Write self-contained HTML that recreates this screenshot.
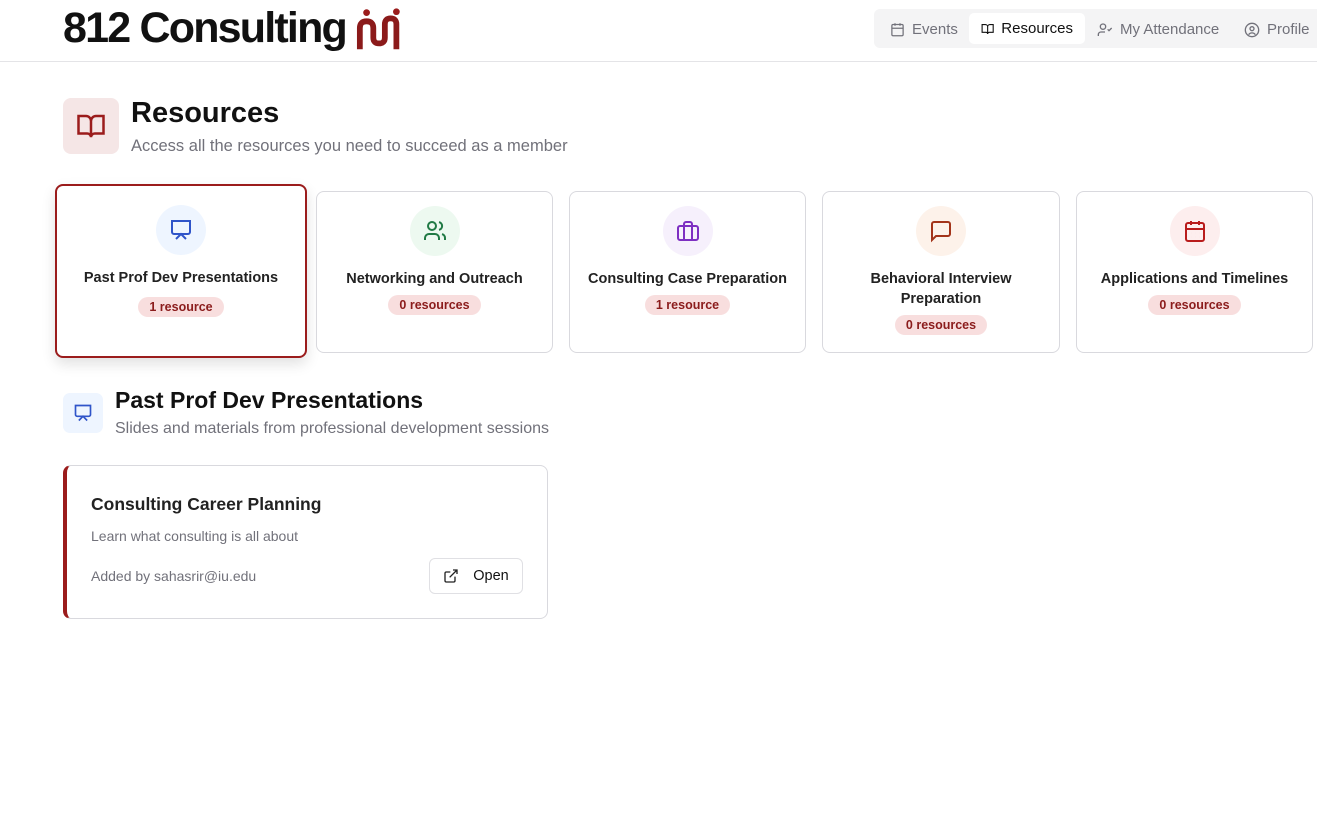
<!DOCTYPE html>
<html><head><meta charset="utf-8"><style>
*{box-sizing:border-box;margin:0;padding:0}
body{width:1317px;height:813px;background:#fff;font-family:"Liberation Sans",sans-serif;color:#111;position:relative;overflow:hidden}
.abs{position:absolute}
.hdr{position:absolute;left:0;top:0;width:1317px;height:62px;border-bottom:1px solid #e4e4e7}
.logo{left:63px;top:4px;font-size:43px;font-weight:bold;letter-spacing:-1.8px;color:#111}
.nav{left:874px;top:9px;width:450px;height:39px;background:#f4f4f5;border-radius:6px}
.ni{position:absolute;top:5px;height:31px;display:flex;align-items:center;gap:7px;font-size:15px;color:#71717a}
.ni.act{background:#fff;color:#111;border-radius:5px;padding:0 12px}
.card{position:absolute;top:191px;height:162px;border:1px solid #d9d9de;border-radius:8px;background:#fff;text-align:center}
.card.sel{border:2px solid #9b1c1c;box-shadow:0 6px 14px rgba(0,0,0,.12)}
.ic{position:absolute;left:50%;margin-left:-25px;top:14px;width:50px;height:50px;border-radius:50%;display:flex;align-items:center;justify-content:center}
.ct{position:absolute;left:0;right:0;top:77px;font-size:14.5px;font-weight:bold;color:#222;line-height:20px}
.bd{display:inline-block;background:#f8dede;color:#8b1c1c;font-size:12.5px;font-weight:bold;border-radius:11px;padding:3px 11px}
</style></head><body>
<div class="hdr"></div>
<div class="abs logo">812 Consulting</div>
<svg class="abs" style="left:356px;top:6px" width="50" height="46" viewBox="0 0 52 46"><circle cx="11" cy="6" r="3.5" fill="#9b1c1c"/><circle cx="42" cy="5" r="3.5" fill="#9b1c1c"/><path d="M4 44V22q0-7 7-7t7 7v10q0 6 6 6t6-6V18q0-6 6-6t6 6v26" fill="none" stroke="#8b1a1a" stroke-width="6"/></svg>
<div class="abs nav">
<div class="ni" style="left:16px"><svg width="15" height="15" viewBox="0 0 24 24" fill="none" stroke="#71717a" stroke-width="2"><rect x="3" y="4" width="18" height="18" rx="2"/><path d="M16 2v4M8 2v4M3 10h18"/></svg>Events</div>
<div class="ni act" style="left:95px;width:116px;top:4px"><svg width="16" height="16" viewBox="0 0 24 24" fill="none" stroke="#111" stroke-width="2"><path d="M2 4h6a4 4 0 0 1 4 4v13a3 3 0 0 0-3-3H2zM22 4h-6a4 4 0 0 0-4 4v13a3 3 0 0 1 3-3h7z"/></svg>Resources</div>
<div class="ni" style="left:223px"><svg width="16" height="16" viewBox="0 0 24 24" fill="none" stroke="#71717a" stroke-width="2"><circle cx="9" cy="7" r="4"/><path d="M2 21v-2a4 4 0 0 1 4-4h6M16 11l2 2 4-4"/></svg>My Attendance</div>
<div class="ni" style="left:370px"><svg width="16" height="16" viewBox="0 0 24 24" fill="none" stroke="#71717a" stroke-width="2"><circle cx="12" cy="12" r="10"/><circle cx="12" cy="10" r="3"/><path d="M7 19a6 6 0 0 1 10 0"/></svg>Profile</div>
</div>

<div class="abs" style="left:63px;top:98px;width:56px;height:56px;background:#f5e6e6;border-radius:8px;display:flex;align-items:center;justify-content:center"><svg width="30" height="30" viewBox="0 0 24 24" fill="none" stroke="#9b1c1c" stroke-width="2"><path d="M2 4h6a4 4 0 0 1 4 4v13a3 3 0 0 0-3-3H2zM22 4h-6a4 4 0 0 0-4 4v13a3 3 0 0 1 3-3h7z"/></svg></div>
<div class="abs" style="left:131px;top:97px;font-size:29px;font-weight:bold;color:#111">Resources</div>
<div class="abs" style="left:131px;top:137px;font-size:16.5px;color:#71717a">Access all the resources you need to succeed as a member</div>

<div class="card sel" style="left:55px;top:184px;width:252px;height:174px"><div class="ic" style="background:#eef5ff;top:19px"><svg width="24" height="24" viewBox="0 0 24 24" fill="none" stroke="#2f54c9" stroke-width="2"><path d="M2 3h20M3 3v11a2 2 0 0 0 2 2h14a2 2 0 0 0 2-2V3M7 21l5-5 5 5"/></svg></div><div class="ct" style="top:82px">Past Prof Dev Presentations</div><div class="abs" style="left:0;right:0;top:111px"><span class="bd">1 resource</span></div></div>
<div class="card" style="left:316px;width:237px"><div class="ic" style="background:#edf9f0"><svg width="24" height="24" viewBox="0 0 24 24" fill="none" stroke="#217a45" stroke-width="2"><circle cx="9" cy="7" r="4"/><path d="M2 21v-2a4 4 0 0 1 4-4h6a4 4 0 0 1 4 4v2M16 3.1a4 4 0 0 1 0 7.8M22 21v-2a4 4 0 0 0-3-3.9"/></svg></div><div class="ct">Networking and Outreach</div><div class="abs" style="left:0;right:0;top:103px"><span class="bd">0 resources</span></div></div>
<div class="card" style="left:569px;width:237px"><div class="ic" style="background:#f6f0fc"><svg width="24" height="24" viewBox="0 0 24 24" fill="none" stroke="#7e2fc2" stroke-width="2"><rect x="2" y="7" width="20" height="14" rx="2"/><path d="M16 21V5a2 2 0 0 0-2-2h-4a2 2 0 0 0-2 2v16"/></svg></div><div class="ct">Consulting Case Preparation</div><div class="abs" style="left:0;right:0;top:103px"><span class="bd">1 resource</span></div></div>
<div class="card" style="left:822px;width:238px"><div class="ic" style="background:#fdf2ea"><svg width="24" height="24" viewBox="0 0 24 24" fill="none" stroke="#a3341a" stroke-width="2"><path d="M21 15a2 2 0 0 1-2 2H7l-4 4V5a2 2 0 0 1 2-2h14a2 2 0 0 1 2 2z"/></svg></div><div class="ct">Behavioral Interview<br>Preparation</div><div class="abs" style="left:0;right:0;top:123px"><span class="bd">0 resources</span></div></div>
<div class="card" style="left:1076px;width:237px"><div class="ic" style="background:#fdeeee"><svg width="24" height="24" viewBox="0 0 24 24" fill="none" stroke="#b91c1c" stroke-width="2"><rect x="3" y="4" width="18" height="18" rx="2"/><path d="M16 2v4M8 2v4M3 10h18M8 14h.01M12 14h.01M16 14h.01M8 18h.01M12 18h.01M16 18h.01"/></svg></div><div class="ct">Applications and Timelines</div><div class="abs" style="left:0;right:0;top:103px"><span class="bd">0 resources</span></div></div>

<div class="abs" style="left:63px;top:393px;width:40px;height:40px;background:#eef5ff;border-radius:7px;display:flex;align-items:center;justify-content:center"><svg width="20" height="20" viewBox="0 0 24 24" fill="none" stroke="#2f54c9" stroke-width="2"><path d="M2 3h20M3 3v11a2 2 0 0 0 2 2h14a2 2 0 0 0 2-2V3M7 21l5-5 5 5"/></svg></div>
<div class="abs" style="left:115px;top:387px;font-size:23px;font-weight:bold;color:#111">Past Prof Dev Presentations</div>
<div class="abs" style="left:115px;top:420px;font-size:16px;color:#71717a">Slides and materials from professional development sessions</div>

<div class="abs" style="left:63px;top:465px;width:485px;height:154px;border:1px solid #d9d9de;border-left:4px solid #9b1c1c;border-radius:8px">
<div class="abs" style="left:24px;top:28px;font-size:17.5px;font-weight:bold;color:#222">Consulting Career Planning</div>
<div class="abs" style="left:24px;top:62px;font-size:14px;color:#71717a">Learn what consulting is all about</div>
<div class="abs" style="left:24px;top:102px;font-size:14px;color:#71717a">Added by sahasrir@iu.edu</div>
<div class="abs" style="left:362px;top:92px;width:94px;height:36px;border:1px solid #e0e0e4;border-radius:6px;display:flex;align-items:center;justify-content:center;gap:14px;font-size:14.5px;color:#111"><svg width="16" height="16" viewBox="0 0 24 24" fill="none" stroke="#222" stroke-width="2"><path d="M15 3h6v6M10 14 21 3M18 13v6a2 2 0 0 1-2 2H5a2 2 0 0 1-2-2V8a2 2 0 0 1 2-2h6"/></svg>Open</div>
</div>
</body></html>
